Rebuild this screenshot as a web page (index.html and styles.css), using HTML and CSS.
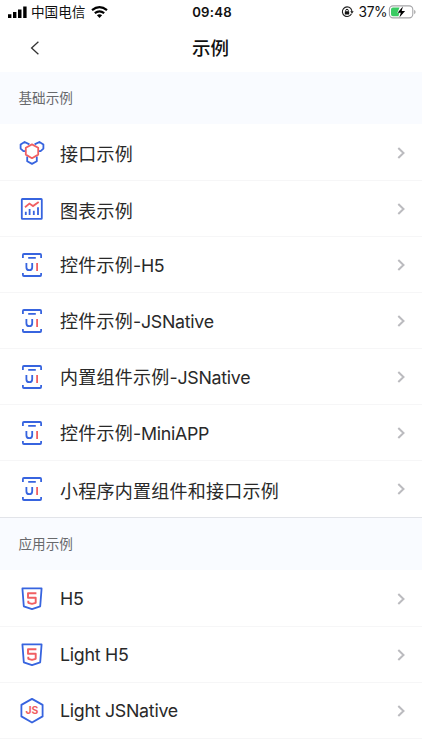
FILE: index.html
```html
<!DOCTYPE html>
<html lang="zh-CN">
<head>
<meta charset="utf-8">
<meta name="viewport" content="width=device-width, initial-scale=1">
<title>示例</title>
<link rel="stylesheet" href="styles.css">
</head>
<body>
<svg class="sprite" aria-hidden="true">
  <symbol id="chevron" viewBox="0 0 10 14"><path d="M2.3 2l5.2 5-5.2 5" fill="none" stroke="#bbbbbf" stroke-width="2"/></symbol>
  <symbol id="api" viewBox="0 0 26 26" fill="none" stroke-width="1.8" stroke-linejoin="round">
    <path d="M7 11.2H4.4L1.6 8.6V4.6L5.6 2l4.8 2.4M19 11.2h2.6l2.8-2.6V4.6l-4-2.6-4.8 2.4M8.2 16.5v4.7l4.8 2.7 4.8-2.7v-4.7" stroke="#3764df"/>
    <path d="M13 4.4l6.2 3.4v6.8L13 18.2l-6.2-3.6V7.8z" stroke="#f05f62"/>
  </symbol>
  <symbol id="chart" viewBox="0 0 26 26" fill="none" stroke="#3764df" stroke-width="1.8">
    <rect x="2.8" y="3" width="20" height="19.8" rx=".6"/>
    <path d="M6.8 19v-3.2M10.6 19v-6M14.8 19v-4.3M19 19v-7.7"/>
    <path d="M6 11.2l4.4-3.6 3.6 2.5 5.7-4.1" stroke="#f05f62"/>
  </symbol>
  <symbol id="ui" viewBox="0 0 26 26" fill="none" stroke="#3764df" stroke-width="1.8">
    <path d="M3.9 6V3Q3.9 2 4.9 2h16.2q1 0 1 1v3M3.9 21v2q0 1 1 1h16.2q1 0 1-1v-2M9.2 5.9h7.6"/>
    <path d="M7.4 11v4.2q0 3 2.9 3t2.9-3V11"/>
    <path d="M18.1 11v8" stroke="#f05f62"/>
  </symbol>
  <symbol id="html5" viewBox="0 0 26 26" fill="none" stroke-width="1.8" stroke-linejoin="round">
    <path d="M3.4 2.4h19.2l-1.4 17.9-8.2 2.8-8.2-2.8z" stroke="#3764df"/>
    <path d="M17.4 7.2H9v4.5h7.7v5.1L13 17.9l-3.7-1.1v-2" stroke="#f05f62" stroke-width="1.9"/>
  </symbol>
</svg>

<div class="status">
  <div class="carrier">
    <svg width="20" height="12" viewBox="0 0 20 12"><path d="M0 8.2h3.4V12H0zM5 6h3.4v6H5zM10 3.5h3.5V12H10zM15.2.5h3.4V12h-3.4z"/></svg>
    <span class="carrier-name">中国电信</span>
    <svg class="wifi" width="17" height="12" viewBox="0 0 17 12"><path d="M1 4.2q7.5-6 15 0M3.8 7.1q4.7-3.6 9.4 0" fill="none" stroke="#000" stroke-width="2.2"/><path d="M5.9 9.3q2.6-1.9 5.2 0L8.5 12z"/></svg>
  </div>
  <div class="time">09:48</div>
  <div class="power">
    <svg width="13" height="12" viewBox="0 0 13 12"><path d="M9.7 2.4A4.8 4.8 0 1 0 10.5 7.8M9.7 2.4Q11 4 10.9 6" fill="none" stroke="#222" stroke-width="1.1"/><path d="M9.2 5.3h3.5L11 7.7z" fill="#222"/><rect x="3.8" y="5.2" width="4.4" height="3.4" rx=".5" fill="#111"/><path d="M4.7 5.4V4.5q0-1.2 1.3-1.2t1.3 1.2v.9" fill="none" stroke="#111"/></svg>
    <span class="percent">37%</span>
    <svg width="28" height="14" viewBox="0 0 28 14"><rect x="1.4" y=".9" width="23.4" height="12" rx="3.6" fill="#fff" stroke="#a5a5a8" stroke-width="1.1"/><path d="M5 2.5h6.6L9.2 8h2l-.7 3.3H5q-2 0-2-2V4.5q0-2 2-2z" fill="#3acb63"/><path d="M14.9 1.5L9.6 7.7h3.2l-1.4 4.7 5.7-6.5h-3.4z"/><path d="M26.1 4.7v4.5q1.5-.7 1.5-2.2t-1.5-2.3z" fill="#aaa"/></svg>
  </div>
</div>
<header class="nav">
  <svg class="back" width="10" height="14" viewBox="0 0 10 14"><path d="M8.4.7L1.6 7l6.8 6.3" fill="none" stroke="#333" stroke-width="1.3"/></svg>
  <h1>示例</h1>
</header>
<main>
  <h2 class="section">基础示例</h2>
  <ul class="list">
    <li class="cjk"><svg class="icon"><use href="#api"/></svg><span>接口示例</span><svg class="arrow"><use href="#chevron"/></svg></li>
    <li class="cjk"><svg class="icon"><use href="#chart"/></svg><span>图表示例</span><svg class="arrow"><use href="#chevron"/></svg></li>
    <li class="mixed"><svg class="icon"><use href="#ui"/></svg><span>控件示例<b>-H5</b></span><svg class="arrow"><use href="#chevron"/></svg></li>
    <li class="mixed"><svg class="icon"><use href="#ui"/></svg><span>控件示例<b>-JSNative</b></span><svg class="arrow"><use href="#chevron"/></svg></li>
    <li class="mixed"><svg class="icon"><use href="#ui"/></svg><span>内置组件示例<b>-JSNative</b></span><svg class="arrow"><use href="#chevron"/></svg></li>
    <li class="mixed"><svg class="icon"><use href="#ui"/></svg><span>控件示例<b>-MiniAPP</b></span><svg class="arrow"><use href="#chevron"/></svg></li>
    <li class="cjk last"><svg class="icon"><use href="#ui"/></svg><span>小程序内置组件和接口示例</span><svg class="arrow"><use href="#chevron"/></svg></li>
  </ul>
  <h2 class="section section-app">应用示例</h2>
  <ul class="list">
    <li><svg class="icon"><use href="#html5"/></svg><span><b>H5</b></span><svg class="arrow"><use href="#chevron"/></svg></li>
    <li><svg class="icon"><use href="#html5"/></svg><span><b>Light H5</b></span><svg class="arrow"><use href="#chevron"/></svg></li>
    <li><svg class="icon" viewBox="0 0 26 26"><path d="M13 .9l10.6 6v11.5L13 24.5 2.4 18.4V6.9z" fill="none" stroke="#3764df" stroke-width="1.8" stroke-linejoin="round"/><text x="13" y="16.4" text-anchor="middle" class="js-label">JS</text></svg><span><b>Light JSNative</b></span><svg class="arrow"><use href="#chevron"/></svg></li>
  </ul>
</main>
</body>
</html>
```
FILE: styles.css
```css
* { box-sizing: border-box; }
body {
  margin: 0;
  height: 750px;
  overflow: hidden;
  background: #fff;
  color: #292929;
  font-family: Inter, "Noto Sans CJK SC", sans-serif;
}
svg { display: block; flex: none; }
.sprite { position: absolute; width: 0; height: 0; }
.status {
  display: grid;
  grid-template-columns: 1fr auto 1fr;
  align-items: center;
  height: 24px;
  padding: 0 6px 0 8px;
  color: #111;
  line-height: 24px;
}
.carrier, .power { display: flex; align-items: center; }
.carrier-name { margin-left: 3px; font-size: 13.6px; }
.wifi { margin-left: 6px; }
.time { font-size: 13.2px; font-weight: 600; letter-spacing: .2px; }
.power { justify-content: flex-end; }
.percent { margin: 0 1px 0 5px; font-size: 13.8px; letter-spacing: -.5px; }
.nav {
  display: grid;
  grid-template-columns: 1fr auto 1fr;
  align-items: center;
  height: 48px;
  padding: 0 31px 0 30px;
}
.nav h1 { margin: 0; color: #111; font-size: 18.5px; font-weight: 500; line-height: 48px; }
.section {
  height: 52px;
  margin: 0;
  padding-left: 18.5px;
  background: #f9fbff;
  color: #68696c;
  font-size: 13.6px;
  font-weight: 400;
  line-height: 52px;
}
.section-app { height: 53px; border-top: 1px solid #e2e4e9; }
.list { margin: 0; padding: 0; list-style: none; }
.list li {
  display: flex;
  align-items: center;
  height: 56px;
  padding: 1px 16px 0 19px;
  border-bottom: 1px solid #f6f6f7;
}
.list li:first-child { height: 57px; }
.list .last { padding-top: 0; border-bottom: 0; }
.icon { width: 26px; height: 26px; }
.list span { flex: 1; margin-left: 15px; font-size: 18px; line-height: 26px; letter-spacing: .25px; }
.list b { font-size: 17.8px; font-weight: 400; letter-spacing: -.27px; }
.list .cjk span { padding-top: 5px; }
.list .mixed span { padding-top: 2px; }
.arrow { width: 10px; height: 14px; }
.js-label { fill: #f05f62; font: 700 10.5px Inter, sans-serif; }
```
